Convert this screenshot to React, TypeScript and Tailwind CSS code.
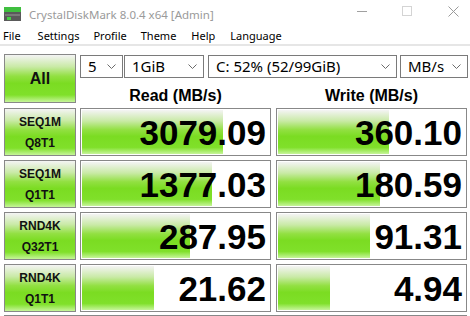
import React from 'react';

const ui = { fontFamily: '"Noto Sans", "Open Sans", sans-serif' };
const bold = { fontFamily: '"Liberation Sans", Arial, sans-serif' };

const green =
  'bg-[linear-gradient(to_bottom,#f4f4f4_0%,#c9eaa6_25%,#92e042_45%,#7bdc22_60%,#80e02a_85%,#c6f59a_100%)]';

interface Row {
  top: string;
  bottom: string;
  read: string;
  write: string;
  readW: number;
  writeW: number;
}

const rows: Row[] = [
  { top: 'SEQ1M', bottom: 'Q8T1', read: '3079.09', write: '360.10', readW: 141, writeW: 111 },
  { top: 'SEQ1M', bottom: 'Q1T1', read: '1377.03', write: '180.59', readW: 130, writeW: 102 },
  { top: 'RND4K', bottom: 'Q32T1', read: '287.95', write: '91.31', readW: 108, writeW: 92 },
  { top: 'RND4K', bottom: 'Q1T1', read: '21.62', write: '4.94', readW: 72, writeW: 52 },
];

const Chevron = () => (
  <svg width="9" height="6" viewBox="0 0 9 6" className="shrink-0">
    <path d="M0.5 0.5 L4.5 4.5 L8.5 0.5" fill="none" stroke="#6b6b6b" strokeWidth="1" />
  </svg>
);

const Combo: React.FC<{ label: string; width: string }> = ({ label, width }) => (
  <div
    className={`${width} h-[23px] border border-[#7a7a7a] bg-white flex items-center justify-between pl-[7px] pr-[6px] text-[15px] text-black`}
    style={ui}
  >
    <span className="leading-none">{label}</span>
    <Chevron />
  </div>
);

const Meter: React.FC<{ value: string; w: number }> = ({ value, w }) => (
  <div className="relative w-[191px] h-[48px] border border-[#888888] bg-white p-px">
    <div className={`h-full ${green}`} style={{ width: w }} />
    <div
      className="absolute inset-0 flex items-center justify-end pr-[4px] text-[35px] font-bold text-black leading-none"
      style={bold}
    >
      {value}
    </div>
  </div>
);

const Label: React.FC<{ top: string; bottom: string }> = ({ top, bottom }) => (
  <div
    className={`w-[72px] h-[48px] border border-[#888888] ${green} flex flex-col items-center justify-center gap-[9px] text-[12px] font-bold text-[#111] leading-none`}
    style={bold}
  >
    <span>{top}</span>
    <span>{bottom}</span>
  </div>
);

export default function App() {
  return (
    <div className="w-[470px] h-[316px] bg-white overflow-hidden relative">
      {/* title bar */}
      <div className="h-[29px] flex items-center relative">
        <svg width="17" height="14" viewBox="0 0 17 14" className="ml-[4px] mt-[-2px]">
          <rect x="0" y="0" width="17" height="5" fill="#3fbf3f" />
          <rect x="0" y="5" width="17" height="9" fill="#5a5a5a" />
          <rect x="1" y="7" width="15" height="2" fill="#7a7a7a" />
          <rect x="3" y="10" width="4" height="3" fill="#45d245" />
        </svg>
        <span className="ml-[8px] text-[11.5px] text-[#9a9a9a]" style={ui}>
          CrystalDiskMark 8.0.4 x64 [Admin]
        </span>
        <div className="absolute left-[357px] top-[11px] w-[10px] h-px bg-[#a0a0a0]" />
        <div className="absolute left-[402px] top-[6px] w-[10px] h-[10px] border border-[#d4d4d4]" />
        <svg width="11" height="11" viewBox="0 0 11 11" className="absolute left-[448px] top-[6px]">
          <path d="M0.5 0.5 L10.5 10.5 M10.5 0.5 L0.5 10.5" stroke="#9a9a9a" strokeWidth="1" />
        </svg>
      </div>

      {/* menu bar */}
      <div className="h-[17px] flex items-center text-[11px] text-black border-b-[2px] border-[#e6e6e6]" style={ui}>
        <span className="ml-[3px]">File</span>
        <span className="ml-[17px]">Settings</span>
        <span className="ml-[14px]">Profile</span>
        <span className="ml-[14px]">Theme</span>
        <span className="ml-[15px]">Help</span>
        <span className="ml-[15px]">Language</span>
      </div>

      {/* content */}
      <div className="pl-[4px] pt-[8px]">
        <div className="flex">
          <div
            className={`w-[72px] h-[49px] border border-[#888888] ${green} flex items-center justify-center text-[16px] font-bold text-[#111]`}
            style={bold}
          >
            All
          </div>
          <div className="ml-[4px] flex flex-col">
            <div className="flex items-center mt-px">
              <Combo label="5" width="w-[43px]" />
              <div className="w-[1px]" />
              <Combo label="1GiB" width="w-[80px]" />
              <div className="w-[4px]" />
              <Combo label="C: 52% (52/99GiB)" width="w-[189px]" />
              <div className="w-[3px]" />
              <Combo label="MB/s" width="w-[68px]" />
            </div>
            <div className="flex mt-[10px] text-[16px] font-bold text-black leading-none" style={bold}>
              <div className="w-[191px] text-center">Read (MB/s)</div>
              <div className="w-[5px]" />
              <div className="w-[191px] text-center">Write (MB/s)</div>
            </div>
          </div>
        </div>

        <div className="flex flex-col gap-[4px] mt-[4px]">
          {rows.map((r, i) => (
            <div key={i} className="flex">
              <Label top={r.top} bottom={r.bottom} />
              <div className="w-[4px]" />
              <Meter value={r.read} w={r.readW} />
              <div className="w-[5px]" />
              <Meter value={r.write} w={r.writeW} />
            </div>
          ))}
        </div>
        <div className="mt-[3px] mr-[3px] h-px bg-[#888888]" />
      </div>
    </div>
  );
}
